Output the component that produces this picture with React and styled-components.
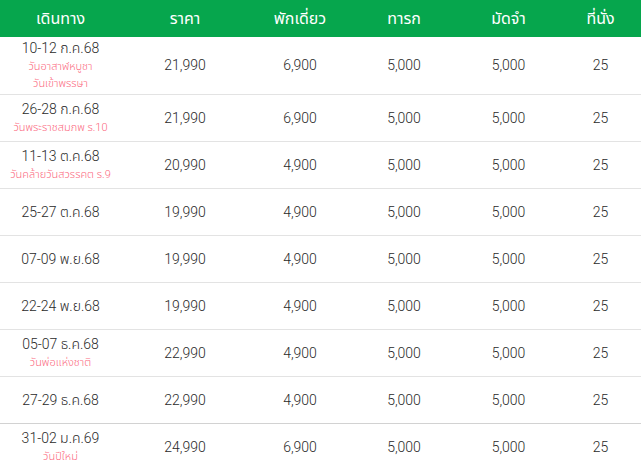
import React from 'react';
import styled, { createGlobalStyle } from 'styled-components';

const GlobalStyle = createGlobalStyle`
  html, body {
    margin: 0;
    padding: 0;
    background: #fff;
  }
  body {
    font-family: Roboto, "Noto Sans Thai", "Noto Sans", "Liberation Sans", sans-serif;
    color: #333;
  }
`;

const COLS = '121px 128px 102px 106px 103px 81px';

const Table = styled.div`
  width: 641px;
  display: flex;
  flex-direction: column;
`;

const HeaderRow = styled.div`
  display: grid;
  grid-template-columns: ${COLS};
  height: 37px;
  background: #06a64d;
  align-items: center;
`;

const HeadCell = styled.div`
  text-align: center;
  color: #fff;
  font-size: 16px;
  line-height: 20px;
`;

const Row = styled.div`
  display: grid;
  grid-template-columns: ${COLS};
  min-height: 46px;
  align-items: center;
  border-bottom: 1px solid ${(p) => (p.$dark ? '#d2d2d2' : '#e3e3e3')};
`;

const Cell = styled.div`
  text-align: center;
  font-size: 14px;
  font-weight: 300;
  line-height: 19px;
  color: #2a2a2a;
  padding: 2px 0;
`;

const Trip = styled.div`
  display: flex;
  flex-direction: column;
  align-items: center;
`;

const Note = styled.span`
  font-size: 11px;
  line-height: 17px;
  color: #fb6a7f;
  white-space: nowrap;
`;

const rows = [
  { date: '10-12 ก.ค.68', notes: ['วันอาสาฬหบูชา', 'วันเข้าพรรษา'], price: '21,990', single: '6,900' },
  { date: '26-28 ก.ค.68', notes: ['วันพระราชสมภพ ร.10'], price: '21,990', single: '6,900' },
  { date: '11-13 ต.ค.68', notes: ['วันคล้ายวันสวรรคต ร.9'], price: '20,990', single: '4,900' },
  { date: '25-27 ต.ค.68', notes: [], price: '19,990', single: '4,900' },
  { date: '07-09 พ.ย.68', notes: [], price: '19,990', single: '4,900' },
  { date: '22-24 พ.ย.68', notes: [], price: '19,990', single: '4,900' },
  { date: '05-07 ธ.ค.68', notes: ['วันพ่อแห่งชาติ'], price: '22,990', single: '4,900' },
  { date: '27-29 ธ.ค.68', notes: [], price: '22,990', single: '4,900', dark: true },
  { date: '31-02 ม.ค.69', notes: ['วันปีใหม่'], price: '24,990', single: '6,900' },
];

const headers = ['เดินทาง', 'ราคา', 'พักเดี่ยว', 'ทารก', 'มัดจำ', 'ที่นั่ง'];

export default function App() {
  return (
    <>
      <GlobalStyle />
      <Table>
        <HeaderRow>
          {headers.map((h) => (
            <HeadCell key={h}>{h}</HeadCell>
          ))}
        </HeaderRow>
        {rows.map((r) => (
          <Row key={r.date} $dark={r.dark}>
            <Cell>
              <Trip>
                <span>{r.date}</span>
                {r.notes.map((n) => (
                  <Note key={n}>{n}</Note>
                ))}
              </Trip>
            </Cell>
            <Cell>{r.price}</Cell>
            <Cell>{r.single}</Cell>
            <Cell>5,000</Cell>
            <Cell>5,000</Cell>
            <Cell>25</Cell>
          </Row>
        ))}
      </Table>
    </>
  );
}
